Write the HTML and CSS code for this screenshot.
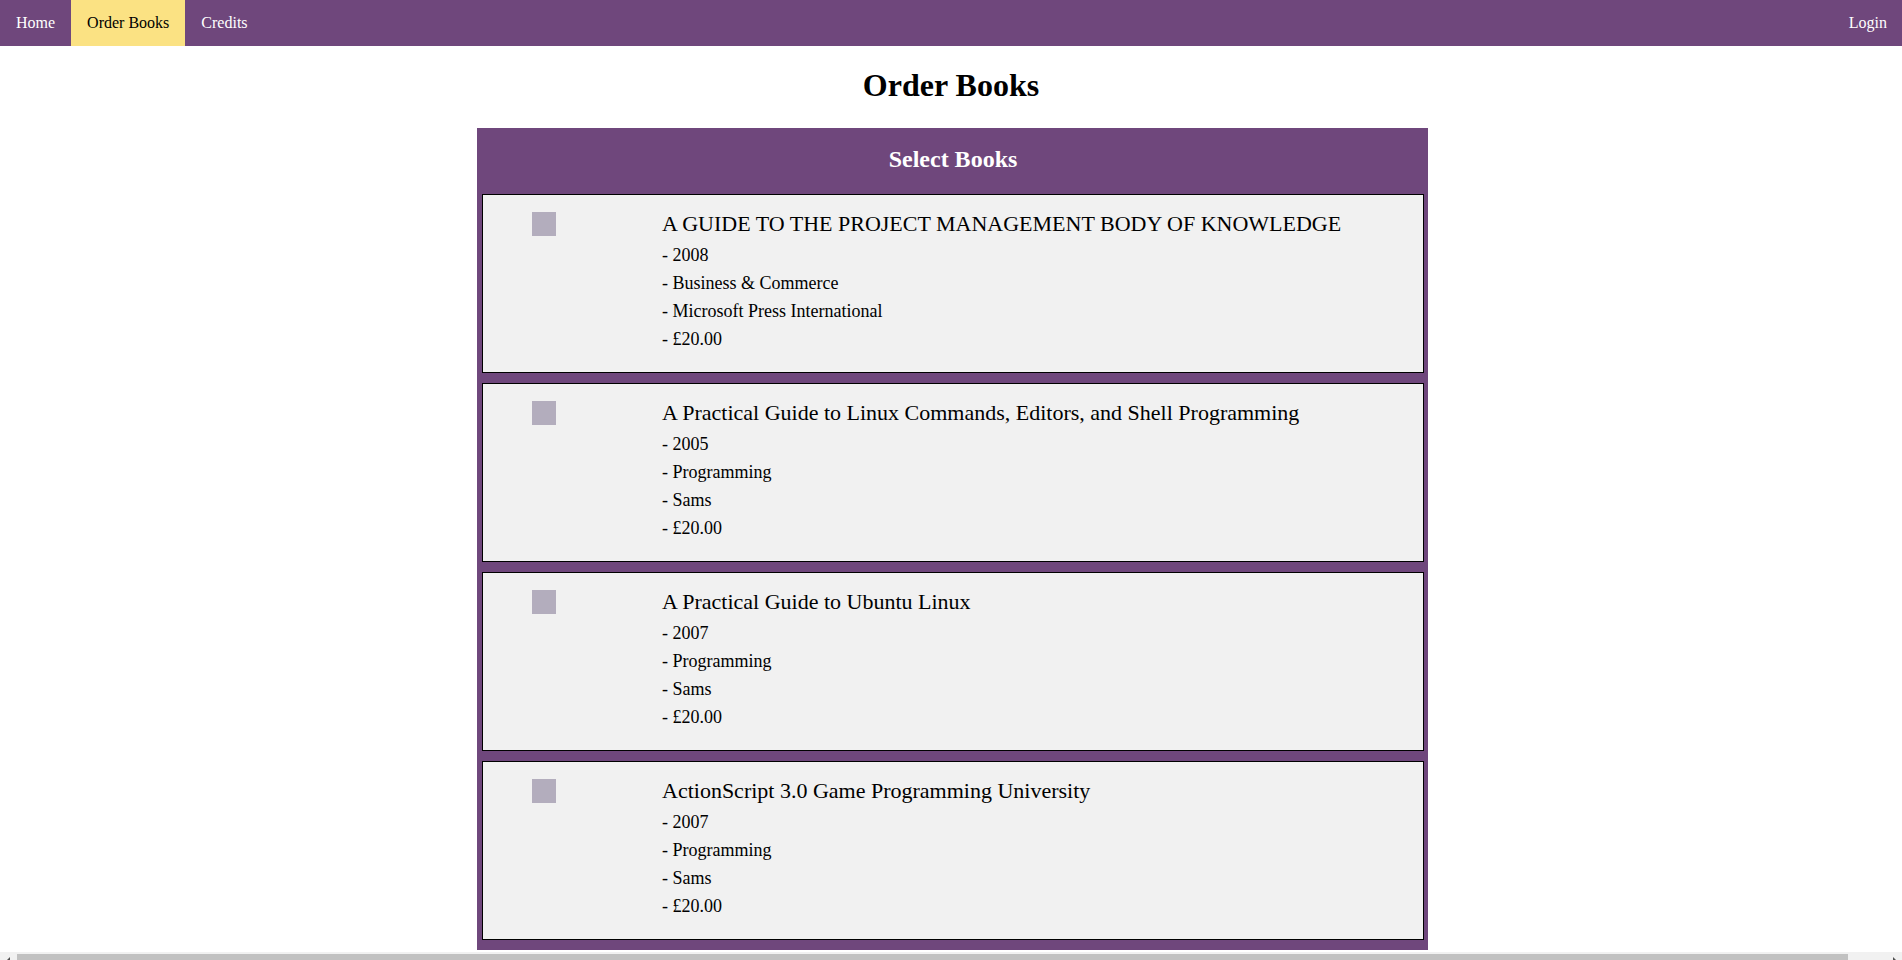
FILE: index.html
```html
<!DOCTYPE html>
<html lang="en">
<head>
<meta charset="utf-8">
<title>Order Books</title>
<link rel="stylesheet" href="styles.css">
</head>
<body>
<nav class="topnav">
  <div class="nav-left">
    <a class="nav-link" href="#">Home</a>
    <a class="nav-link active" href="#">Order Books</a>
    <a class="nav-link" href="#">Credits</a>
  </div>
  <a class="nav-link" href="#">Login</a>
</nav>

<h1 class="page-title">Order Books</h1>

<form class="books">
  <h2 class="books-head">Select Books</h2>

  <div class="book">
    <input class="book-check" type="checkbox">
    <div class="book-info">
      <div class="book-title">A GUIDE TO THE PROJECT MANAGEMENT BODY OF KNOWLEDGE</div>
      <div class="book-line">- 2008</div>
      <div class="book-line">- Business &amp; Commerce</div>
      <div class="book-line">- Microsoft Press International</div>
      <div class="book-line">- £20.00</div>
    </div>
  </div>

  <div class="book">
    <input class="book-check" type="checkbox">
    <div class="book-info">
      <div class="book-title">A Practical Guide to Linux Commands, Editors, and Shell Programming</div>
      <div class="book-line">- 2005</div>
      <div class="book-line">- Programming</div>
      <div class="book-line">- Sams</div>
      <div class="book-line">- £20.00</div>
    </div>
  </div>

  <div class="book">
    <input class="book-check" type="checkbox">
    <div class="book-info">
      <div class="book-title">A Practical Guide to Ubuntu Linux</div>
      <div class="book-line">- 2007</div>
      <div class="book-line">- Programming</div>
      <div class="book-line">- Sams</div>
      <div class="book-line">- £20.00</div>
    </div>
  </div>

  <div class="book">
    <input class="book-check" type="checkbox">
    <div class="book-info">
      <div class="book-title">ActionScript 3.0 Game Programming University</div>
      <div class="book-line">- 2007</div>
      <div class="book-line">- Programming</div>
      <div class="book-line">- Sams</div>
      <div class="book-line">- £20.00</div>
    </div>
  </div>
</form>

<div class="hscroll" aria-hidden="true">
  <span class="hs-arrow hs-left"></span>
  <span class="hs-thumb"></span>
  <span class="hs-arrow hs-right"></span>
</div>
</body>
</html>
```

FILE: styles.css
```css
html {
  overflow: hidden;
}

body {
  margin: 0;
  font-family: "Liberation Serif", "Times New Roman", serif;
  color: #000;
  background: #fff;
}

.topnav {
  display: flex;
  justify-content: space-between;
  align-items: stretch;
  background: #6f477c;
  height: 46px;
}

.nav-left {
  display: flex;
}

.nav-link {
  display: flex;
  align-items: center;
  padding: 0 16px 1px;
  font-size: 16px;
  color: #fff;
  text-decoration: none;
}

.nav-link:last-child {
  padding-right: 15px;
}

.nav-left .nav-link:last-child {
  padding-right: 16px;
}

.nav-link.active {
  background: #fbe283;
  color: #000;
}

.page-title {
  margin: 21px 0 24px;
  font-size: 32px;
  font-weight: bold;
  text-align: center;
}

.books {
  width: 942px;
  margin: 0 0 0 calc(50% - 474px);
  padding: 0 4px 10px 5px;
  background: #6f477c;
}

.books-head {
  margin: 0;
  padding: 18px 0 21px;
  font-size: 24px;
  font-weight: bold;
  color: #fff;
  text-align: center;
}

.book {
  display: flex;
  align-items: flex-start;
  background: #f1f1f1;
  border: 1px solid #000;
  padding: 16px 20px 19px 49px;
  margin-bottom: 10px;
}

.book:last-child {
  margin-bottom: 0;
}

.book-check {
  appearance: none;
  -webkit-appearance: none;
  width: 24px;
  height: 24px;
  margin: 1px 106px 0 0;
  border: 0;
  background: #b3adbd;
  flex: none;
}

.book-info {
  display: flex;
  flex-direction: column;
}

.book-title {
  font-size: 22px;
  line-height: 26px;
  margin-bottom: 4px;
}

.book-line {
  font-size: 18px;
  line-height: 28px;
}

.hscroll {
  position: fixed;
  left: 0;
  right: 0;
  bottom: 0;
  height: 8px;
  background: #f1f1f1;
  display: flex;
  align-items: flex-end;
}

.hs-arrow {
  width: 17px;
  height: 8px;
  position: relative;
  flex: none;
}

.hs-left::after {
  content: "";
  position: absolute;
  left: 7px;
  bottom: 0;
  border-right: 3px solid #505050;
  border-top: 3px solid transparent;
}

.hs-right::after {
  content: "";
  position: absolute;
  left: 8px;
  bottom: 0;
  border-left: 3px solid #505050;
  border-top: 3px solid transparent;
}

.hs-thumb {
  width: 1831px;
  height: 6px;
  background: #c1c1c1;
  flex: none;
  margin-right: auto;
}
```
